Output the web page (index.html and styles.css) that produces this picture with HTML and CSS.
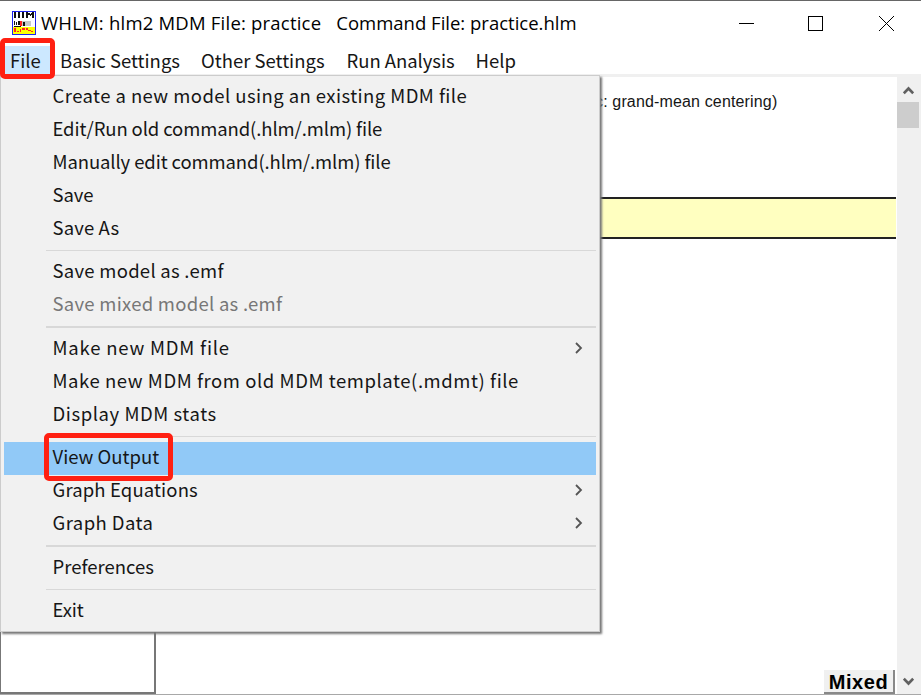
FILE: index.html
```html
<!DOCTYPE html>
<html lang="en">
<head>
<meta charset="utf-8">
<title>WHLM</title>
<link rel="stylesheet" href="styles.css">
</head>
<body>
<div class="window">
  <header class="titlebar">
    <svg class="app-icon" width="24" height="24" viewBox="0 0 24 24" shape-rendering="crispEdges">
      <path fill="#fff" d="M0 0h24v24H0z"/>
      <path fill="#c8c8c8" d="M9 10h10v5H9z"/>
      <path fill="#ffff00" d="M1 16h22v7H1z"/>
      <path fill="#111" d="M2 1h2v6H2zM6 1h2v6H6zM10 1h2v6h-2zM14 1h2v6h-2zM16 2h2v2h-2zM18 3h1v2h-1zM19 2h1v2h-1zM20 1h2v6h-2zM2 10h1v4H2zM4 11h1v3H4zM6 10h2v4H6zM11 11h2v4h-2zM2 15h7v1H2z"/>
      <path fill="#f22" d="M8 10h2v5H8zM2 17h2v4H2zM5 20h2v1H5zM8 18h1v3H8zM10 17h3v2h-3zM14 17h2v2h-2zM16 19h3v1h-3zM19 20h2v1h-2z"/>
      <path fill="none" stroke="#1c22ee" stroke-width="1" d="M.5.5h23v23H.5z"/>
    </svg>
    <span class="title"><span class="title-mdm">WHLM: hlm2 MDM File: practice</span><span class="title-command">Command File: practice.hlm</span></span>
    <svg class="controls" width="155" height="16" viewBox="0 0 155 16" fill="none" stroke="#000" shape-rendering="crispEdges">
      <path d="M0 8.500h15M69.500 1.500h14v14h-14z"/>
      <path shape-rendering="auto" d="m140 1 15 15M155 1l-15 15"/>
    </svg>
  </header>
  <nav class="menubar">
    <span class="tab tab-file">File</span>
    <span class="tab tab-basic">Basic Settings</span>
    <span class="tab tab-other">Other Settings</span>
    <span class="tab tab-run">Run Analysis</span>
    <span class="tab tab-help">Help</span>
  </nav>
  <main class="workspace">
    <section class="model">
      <p class="hint">c: grand-mean centering)</p>
      <div class="equation"></div>
      <div class="variables"></div>
      <button class="mixed">Mixed</button>
    </section>
    <aside class="scrollbar">
      <svg width="11" height="9" viewBox="0 0 11 9" fill="none" stroke="#606060" stroke-width="2.700"><path d="m.8 7.300 4.700-4.800 4.700 4.800"/></svg>
      <div class="thumb"></div>
      <svg class="down" width="11" height="9" viewBox="0 0 11 9" fill="none" stroke="#606060" stroke-width="2.700"><path d="m.8 1.700 4.700 4.800 4.700-4.800"/></svg>
    </aside>
  </main>
  <div class="menu">
    <div class="item"><span class="track-loose">Create a new model using an existing MDM file</span></div>
    <div class="item"><span class="track-tight">Edit/Run old command(.hlm/.mlm) file</span></div>
    <div class="item"><span class="track-tight">Manually edit command(.hlm/.mlm) file</span></div>
    <div class="item"><span class="track-tight">Save</span></div>
    <div class="item"><span class="track-slight">Save As</span></div>
    <div class="separator"></div>
    <div class="item"><span class="track-medium">Save model as .emf</span></div>
    <div class="item disabled"><span class="track-medium">Save mixed model as .emf</span></div>
    <div class="separator"></div>
    <div class="item"><span class="track-widest">Make new MDM file</span><svg class="arrow" width="8" height="12" viewBox="0 0 8 12"><path d="m1 1 5 5-5 5"/></svg></div>
    <div class="item"><span class="track-wide">Make new MDM from old MDM template(.mdmt) file</span></div>
    <div class="item"><span class="track-wide">Display MDM stats</span></div>
    <div class="separator"></div>
    <div class="item selected"><span>View Output</span></div>
    <div class="item"><span class="track-slight">Graph Equations</span><svg class="arrow" width="8" height="12" viewBox="0 0 8 12"><path d="m1 1 5 5-5 5"/></svg></div>
    <div class="item"><span class="track-loose">Graph Data</span><svg class="arrow" width="8" height="12" viewBox="0 0 8 12"><path d="m1 1 5 5-5 5"/></svg></div>
    <div class="separator"></div>
    <div class="item"><span>Preferences</span></div>
    <div class="separator"></div>
    <div class="item"><span class="track-tight">Exit</span></div>
  </div>
  <div class="highlight highlight-file"></div>
  <div class="highlight highlight-output"></div>
</div>
</body>
</html>
```
FILE: styles.css
```css
* { box-sizing: border-box; }
body { margin: 0; }
.window {
  position: relative;
  display: flex;
  flex-direction: column;
  width: 921px;
  height: 695px;
  overflow: hidden;
  background: #fff;
  border-top: 1px solid #666;
  border-bottom: 1px solid #a8a8a8;
  font-family: "Noto Sans CJK SC", "Noto Sans", sans-serif;
  color: #161616;
}
.titlebar {
  display: flex;
  align-items: center;
  height: 43px;
  padding: 0 27px 0 12px;
  color: #000;
}
.title { display: flex; margin-left: 5px; font-family: "Open Sans", sans-serif; font-size: 18.500px; letter-spacing: 0.210px; white-space: pre; }
.title-command { margin-left: 15px; letter-spacing: 0; }
.controls { margin-left: auto; }
.menubar { display: flex; height: 30px; padding-top: 2px; font-size: 18.500px; line-height: 29px; white-space: nowrap; }
.tab-file { width: 50px; padding-left: 10px; background: #cce8ff; margin-right: 10px; }
.tab-basic { width: 141px; }
.tab-other { width: 145.500px; }
.tab-run { width: 129px; letter-spacing: -0.050px; }
.workspace { flex: 1; display: flex; min-height: 0; border-top: 3px solid #f0f0f0; }
.model { flex: 1; display: flex; flex-direction: column; }
.hint { margin: 13px 0 0 595px; font: 16px/24px "Liberation Sans", sans-serif; white-space: nowrap; letter-spacing: 0.150px; }
.equation { height: 42px; margin: 83px 1px 0 0; background: #ffffc0; border: solid #222; border-width: 2px 0; }
.variables { flex: 1; width: 156px; border: 1px solid #777; border-bottom-width: 2px; border-right-width: 2px; }
.mixed {
  align-self: flex-end;
  width: 71px;
  height: 24px;
  margin: -24px 2px 0 0;
  padding: 0;
  border: solid #888;
  border-width: 0 2px 2px 0;
  background: #f0f0f0;
  color: #000;
  font: bold 20px/24px "Liberation Sans", sans-serif;
  letter-spacing: 0.600px;
}
.scrollbar { display: flex; flex-direction: column; align-items: center; width: 24px; padding: 9px 2px 8px 0; background: #f0f0f0; }
.thumb { width: 22px; height: 26px; margin: 7px 0 0; background: #cdcdcd; }
.down { margin-top: auto; }
.menu {
  position: absolute;
  left: 0;
  top: 74px;
  width: 600px;
  height: 557px;
  padding: 4px 3px 0;
  background: #f1f1f1;
  border: 1px solid #ccc;
  box-shadow: 2px 2px 2px #777;
  font-size: 18.500px;
}
.item { display: flex; align-items: center; height: 33px; padding: 0 13px 0 48.500px; white-space: nowrap; }
.item span { margin-top: -4px; }
.item .arrow { margin-top: -2px; }
.separator { height: 1.500px; margin: 4.500px 0 4.500px 42px; background: #d8d8d8; }
.selected { background: #91c9f7; }
.disabled { color: #777; }
.track-tight { letter-spacing: -0.110px; }
.track-slight { letter-spacing: 0.130px; }
.track-medium { letter-spacing: 0.270px; }
.track-loose { letter-spacing: 0.430px; }
.track-wide { letter-spacing: 0.560px; }
.track-widest { letter-spacing: 0.800px; }
.arrow { margin-left: auto; fill: none; stroke: #555; stroke-width: 1.800; }
.highlight { position: absolute; border: 5px solid #ff2012; border-radius: 5px; }
.highlight-file { left: 0; top: 37px; width: 55px; height: 41px; }
.highlight-output { left: 44px; top: 432px; width: 129px; height: 48px; }
```
